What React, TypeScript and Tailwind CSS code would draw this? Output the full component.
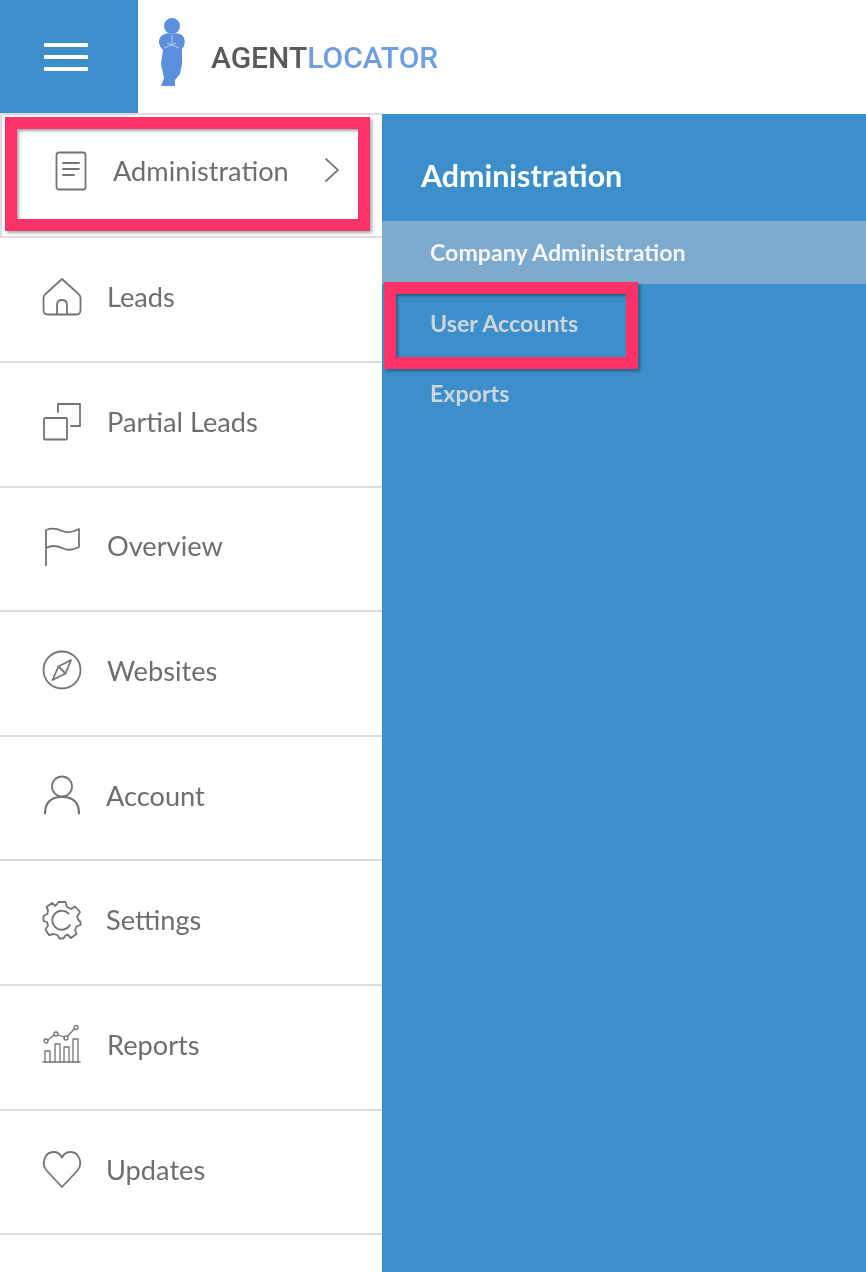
const stroke = { fill: "none", stroke: "#747474", strokeWidth: 1.8, strokeLinecap: "round", strokeLinejoin: "round" } as const;

function Ic({ children, w = 40, h = 40 }: { children: React.ReactNode; w?: number; h?: number }) {
  return <svg width={w} height={h} viewBox="0 0 40 40" {...stroke}>{children}</svg>;
}

const HomeI = () => (
  <Ic><path d="M20 2 L36 16.5 Q38.5 18.5 38.5 21 V33 Q38.5 37.5 34.5 37.5 H5.5 Q1.5 37.5 1.5 33 V21 Q1.5 18.5 4 16.5 Z" /><path d="M15 37 V28 Q15 23 20 23 Q25 23 25 28 V37" /></Ic>
);
const PartialI = () => (
  <Ic><rect x="2" y="17" width="23" height="21.5" rx="1" /><path d="M16 11 V3 H38 V25 H29" /></Ic>
);
const FlagI = () => (
  <Ic><path d="M4 40 V4 Q12 1 20 5 Q28 8 37 3 V21 Q28 26 20 22 Q12 18 4 22" /></Ic>
);
const CompassI = () => (
  <Ic><circle cx="20" cy="20" r="18.5" /><path d="M29 10 L23.5 23.5 L10.5 30 L16.5 16.5 Z" /><path d="M16.5 16.5 L23.5 23.5" /></Ic>
);
const UserI = () => (
  <Ic><circle cx="20" cy="11.5" r="10" /><path d="M3 38.5 Q3 22 20 22 Q37 22 37 38.5" strokeWidth="2.2" /></Ic>
);
const GearI = () => (
  <Ic>
    <path d="M16.5 2 H23.5 L25 7 L29 9 L33 6.5 L38 12 L35 16.5 L36.5 20 L38.5 22 V25 L34.5 26.5 L33 30 L34.5 34 L29 38 L25.5 34.5 L23 36 L21.5 38.5 H17.5 L15.5 35 L11.5 34 L7 35 L3.5 29.5 L6 25.5 L5 22 L1.5 21 V16 L5.5 14 L6 10 L4.5 7 L10 3 L13.5 6 Z" />
    <path d="M26.5 13.5 A9.5 9.5 0 1 0 28 25" />
  </Ic>
);
const ReportsI = () => (
  <Ic>
    <path d="M1 38 H38" strokeWidth="1.6" />
    <path d="M3 38 V27 H8 V38 M13 38 V20 H18 V38 M22 38 V23 H27 V38 M31 38 V15 H36 V38" strokeWidth="1.3" />
    <circle cx="4" cy="17" r="2" strokeWidth="1.3" />
    <circle cx="14" cy="10" r="2" strokeWidth="1.3" />
    <circle cx="24" cy="14" r="2" strokeWidth="1.3" />
    <circle cx="34" cy="3.5" r="2" strokeWidth="1.3" />
    <path d="M6 16 L12 11 M16 11 L22 13 M26 12 L32 5" strokeWidth="1.3" />
  </Ic>
);
const HeartI = () => (
  <Ic><path d="M20 38 L4.5 21.5 C-1 15 2.5 3 11.5 3 C16 3 18.5 5.5 20 8.5 C21.5 5.5 24 3 28.5 3 C37.5 3 41 15 35.5 21.5 Z" /></Ic>
);

const rows: { label: string; icon: React.ReactNode; pad: string }[] = [
  { label: "Leads", icon: <HomeI />, pad: "gap-[25px]" },
  { label: "Partial Leads", icon: <PartialI />, pad: "gap-[25px]" },
  { label: "Overview", icon: <FlagI />, pad: "gap-[25px]" },
  { label: "Websites", icon: <CompassI />, pad: "gap-[25px]" },
  { label: "Account", icon: <UserI />, pad: "gap-[24px]" },
  { label: "Settings", icon: <GearI />, pad: "gap-[24px]" },
  { label: "Reports", icon: <ReportsI />, pad: "gap-[25px]" },
  { label: "Updates", icon: <HeartI />, pad: "gap-[24px]" },
];

export default function App() {
  return (
    <div className="relative h-[1272px] w-[866px] overflow-hidden bg-white font-['Lato','Open_Sans',sans-serif] blur-[0.35px]">
      <header className="flex h-[113px] items-center">
        <div className="flex h-full w-[138px] flex-col items-center justify-center gap-[8px] bg-[#3c8fca] pr-[6px]">
          <span className="h-[4px] w-[44px] rounded-[1px] bg-white" />
          <span className="h-[4px] w-[44px] rounded-[1px] bg-white" />
          <span className="h-[4px] w-[44px] rounded-[1px] bg-white" />
        </div>
        <svg width="28" height="69" viewBox="0 0 28 69" className="ml-[20px] mt-[-9px] shrink-0">
          <circle cx="14" cy="8" r="8" fill="#5b8fdc" />
          <path d="M3 18 Q8 14 14 16 Q21 14 25 18 Q29 25 24 31 L24 46 L22 56 L17 62 L17 68 L3 68 L6 60 L3 46 L5 32 Q-2 25 3 18 Z" fill="#5b8fdc" />
          <path d="M14 17 V28 M6 30 L18 25 M9 25 L21 30" stroke="#a8c3ee" strokeWidth="1.2" fill="none" />
        </svg>
        <div className="ml-[25px] mt-[3px] font-['Roboto',sans-serif] text-[30px] font-medium leading-none">
          <span className="text-[#5a5a5a]">AGENT</span>
          <span className="text-[#6f9ee2]">LOCATOR</span>
        </div>
      </header>

      <div className="flex">
        <nav className="w-[382px] shrink-0 text-[#6e6e6e]">
          <div className="flex h-[125.2px] items-center border-b-2 border-l-2 border-t-2 border-[#dddddd] pb-[9px] pl-[52px] pr-[42px]">
            <svg width="34" height="40" viewBox="0 0 34 40" {...stroke}>
              <rect x="2.5" y="1.5" width="29" height="37" rx="2.5" />
              <path d="M9 12 H25 M9 18 H25 M9 24 H20" />
            </svg>
            <span className="ml-[25px] text-[27.2px] leading-none">Administration</span>
            <svg width="16" height="26" viewBox="0 0 16 26" className="ml-auto mb-[3px]" fill="none" stroke="#777777" strokeWidth="1.7">
              <path d="M1.5 1.5 L14 13 L1.5 24.5" />
            </svg>
          </div>
          {rows.map((r) => (
            <div key={r.label} className={`flex h-[124.67px] items-center border-b-2 border-[#dcdcdc] pb-[6px] pl-[42px] ${r.pad}`}>
              {r.icon}
              <span className="text-[27.2px] leading-none">{r.label}</span>
            </div>
          ))}
        </nav>

        <aside className="mt-[1px] h-[1200px] flex-1 bg-[#3c8fca] font-bold">
          <div className="flex h-[107px] items-center pl-[39px] pt-[15px] text-[30.4px] leading-none text-white">Administration</div>
          <div className="flex h-[63px] items-center bg-[#7eaacd] pl-[48px] pt-[1px] text-[23.2px] leading-none text-[#f4f6f8]">Company Administration</div>
          <div className="flex h-[80px] items-center pl-[48px] text-[23.2px] leading-none text-[#ced6dc]">User Accounts</div>
          <div className="flex h-[60px] items-center pl-[48px] text-[23.2px] leading-none text-[#ced6dc]">Exports</div>
        </aside>
      </div>

      <div className="absolute left-[5px] top-[117px] h-[114px] w-[365px] border-[12px] border-[#fd3268] shadow-[2px_2px_3px_rgba(0,0,0,0.35),inset_2px_2px_3px_rgba(0,0,0,0.35)]" />
      <div className="absolute left-[384px] top-[282px] h-[87px] w-[254px] border-[12px] border-[#fd3268] shadow-[2px_2px_3px_rgba(0,0,0,0.35),inset_2px_2px_3px_rgba(0,0,0,0.35)]" />
    </div>
  );
}
